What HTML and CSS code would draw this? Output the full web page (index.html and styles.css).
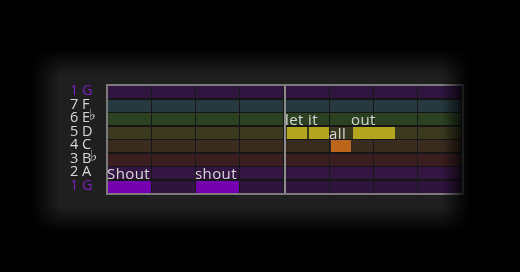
FILE: index.html
```html
<!DOCTYPE html>
<html lang="en">
<head>
  <meta charset="UTF-8">
  <title>Shout - piano roll</title>
  <link rel="stylesheet" href="styles.css">
</head>
<body>
  <div class="panel">
    <div class="labels">
      <div class="label tonic"><span class="deg">1</span><span class="name">G</span></div>
      <div class="label"><span class="deg">7</span><span class="name">F</span></div>
      <div class="label"><span class="deg">6</span><span class="name">E<span class="flat">♭</span></span></div>
      <div class="label"><span class="deg">5</span><span class="name">D</span></div>
      <div class="label"><span class="deg">4</span><span class="name">C</span></div>
      <div class="label"><span class="deg">3</span><span class="name">B<span class="flat">♭</span></span></div>
      <div class="label"><span class="deg">2</span><span class="name">A</span></div>
      <div class="label tonic"><span class="deg">1</span><span class="name">G</span></div>
    </div>

    <div class="roll">
      <div class="half">
        <div class="row g-hi"></div>
        <div class="row f"></div>
        <div class="row eb"></div>
        <div class="row d"></div>
        <div class="row c"></div>
        <div class="row bb"></div>
        <div class="row a">
          <span class="lyric" style="grid-column: 1">Shout</span>
          <span class="lyric" style="grid-column: 5">shout</span>
        </div>
        <div class="row g-lo">
          <span class="note purple" style="grid-column: 1 / span 2"></span>
          <span class="note purple" style="grid-column: 5 / span 2"></span>
        </div>
      </div>

      <div class="half">
        <div class="row g-hi"></div>
        <div class="row f"></div>
        <div class="row eb">
          <span class="lyric" style="grid-column: 1">let it</span>
          <span class="lyric" style="grid-column: 4">out</span>
        </div>
        <div class="row d">
          <span class="note yellow" style="grid-column: 1"></span>
          <span class="note yellow" style="grid-column: 2"></span>
          <span class="lyric" style="grid-column: 3">all</span>
          <span class="note yellow" style="grid-column: 4 / span 2"></span>
        </div>
        <div class="row c">
          <span class="note orange" style="grid-column: 3"></span>
        </div>
        <div class="row bb"></div>
        <div class="row a"></div>
        <div class="row g-lo"></div>
      </div>
    </div>
  </div>
</body>
</html>
```

FILE: styles.css
```css
body {
  margin: 0;
  background: #000;
  font-family: 'Open Sans', 'DejaVu Sans', sans-serif;
  color: #d6d6d6;
}

/* soft grey stage that fades into the black page */
.panel {
  display: flex;
  width: 401px;
  height: 150px;
  margin: 48px 0 0 30px;
  padding: 36px 0 0 39px;
  background: #1f1f1f;
  -webkit-mask-image:
    linear-gradient(to right, transparent 0, #000 30px, #000 calc(100% - 28px), rgba(0,0,0,0.2) calc(100% - 6px), transparent 100%),
    linear-gradient(to bottom, transparent 0, #000 28px, #000 calc(100% - 28px), transparent 100%);
  -webkit-mask-composite: source-in;
  mask-image:
    linear-gradient(to right, transparent 0, #000 30px, #000 calc(100% - 28px), rgba(0,0,0,0.2) calc(100% - 6px), transparent 100%),
    linear-gradient(to bottom, transparent 0, #000 28px, #000 calc(100% - 28px), transparent 100%);
  mask-composite: intersect;
}

.labels {
  display: flex;
  flex-direction: column;
  gap: 1.5px;
  width: 37px;
}

.label {
  display: flex;
  height: 12px;
  line-height: 12px;
  font-size: 14.5px;
  letter-spacing: 0.3px;
}

.label .deg {
  width: 12px;
  padding-left: 1px;
}

.label.tonic {
  color: #7a1fb8;
}

.flat {
  font-family: 'DejaVu Sans', sans-serif;
  font-size: 15px;
  line-height: 0;
  letter-spacing: 0;
  vertical-align: 2px;
  margin-left: -1.5px;
}

.roll {
  display: flex;
  gap: 2px;
  height: 106.5px;
  border: 2px solid #7a7a7a;
  background: #8c8c8c;
}

.half {
  display: flex;
  flex-direction: column;
  gap: 1.5px;
  width: 176px;
  background: #161616;
}

.row {
  display: grid;
  grid-template-columns: repeat(8, 22px);
  grid-template-rows: 12px;
  height: 12px;
  background-image: repeating-linear-gradient(to right, transparent 0, transparent 42.8px, #181818 42.8px, #181818 44px);
}

.row.g-hi { background-color: #2f1540; }
.row.f    { background-color: #25393e; }
.row.eb   { background-color: #2b4121; }
.row.d    { background-color: #3a391f; }
.row.c    { background-color: #3a2b1f; }
.row.bb   { background-color: #3b1e1f; }
.row.a    { background-color: #331641; }
.row.g-lo { background-color: #2f143e; }

.note {
  grid-row: 1;
  margin: 0 1.5px 0 0.5px;
}

.note.purple { background: #7500b0; margin-left: 0; }
.note.yellow { background: #b1a61e; }
.note.orange { background: #bb661b; }

.lyric {
  grid-row: 1;
  font-size: 15px;
  line-height: 12px;
  letter-spacing: 0.4px;
  white-space: nowrap;
  margin-left: -1px;
  color: #d8d8d8;
  z-index: 1;
}
```
